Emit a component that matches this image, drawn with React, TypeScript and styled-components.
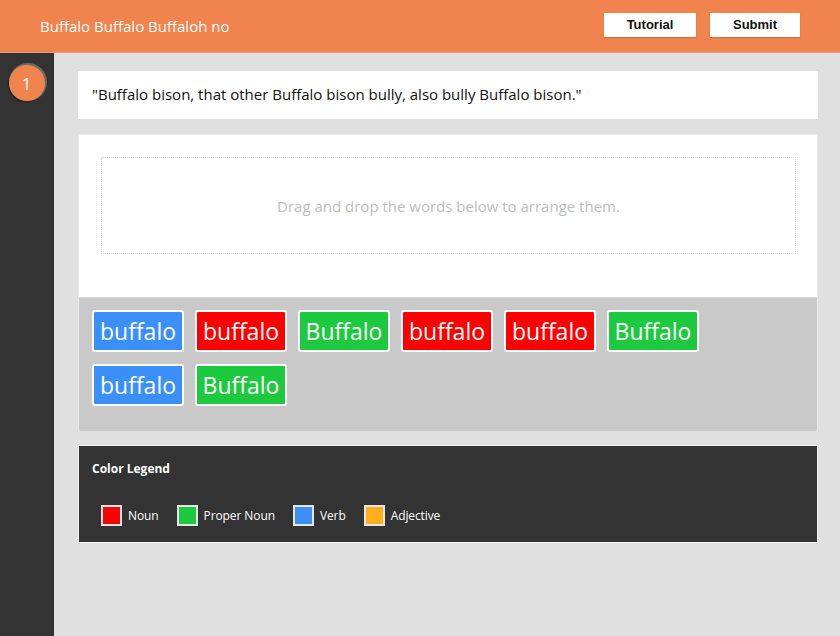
import React from "react";
import styled, { createGlobalStyle } from "styled-components";

const Global = createGlobalStyle`
  html, body { margin: 0; padding: 0; }
  body {
    font-family: "Open Sans", "Liberation Sans", sans-serif;
    background: #e0e0e0;
  }
  * { box-sizing: border-box; }
`;

const Page = styled.div`
  width: 840px;
  height: 636px;
  display: flex;
  flex-direction: column;
  overflow: hidden;
`;

const Header = styled.header`
  height: 53px;
  flex: none;
  background: #f0834e;
  border-bottom: 1px solid #f39c72;
  display: flex;
  align-items: center;
  padding: 0 40px 3px 40px;
`;

const Title = styled.h1`
  margin: 0;
  flex: 1;
  font-size: 15px;
  font-weight: 400;
  color: #fff;
  padding-top: 2px;
`;

const Actions = styled.div`
  display: flex;
  gap: 14px;
`;

const HeaderButton = styled.button<{ $w: number }>`
  width: ${(p) => p.$w}px;
  height: 24px;
  border: none;
  background: #fff;
  font-family: "Liberation Sans", Arial, sans-serif;
  font-weight: 700;
  font-size: 13px;
  color: #111;
  box-shadow: 0 1px 1px rgba(160, 70, 20, 0.35);
  cursor: pointer;
`;

const Body = styled.div`
  flex: 1;
  display: flex;
  min-height: 0;
`;

const Sidebar = styled.aside`
  width: 54px;
  flex: none;
  background: #333;
  padding-top: 12px;
  display: flex;
  flex-direction: column;
  align-items: center;
  padding-right: 1px;
`;

const StepBadge = styled.div`
  width: 36px;
  height: 36px;
  border-radius: 50%;
  background: #f0834e;
  color: #fff;
  font-size: 17px;
  display: flex;
  align-items: center;
  justify-content: center;
  box-shadow: 1px -1px 0 1px #6a6a6a, -1px 1px 2px rgba(0, 0, 0, 0.4);
`;

const Main = styled.main`
  flex: 1;
  padding: 18px 22px 0 24px;
  display: flex;
  flex-direction: column;
`;

const Quote = styled.div`
  height: 48px;
  background: #fff;
  display: flex;
  align-items: center;
  padding: 0 14px 2px;
  font-size: 15px;
  color: #111;
`;

const Workspace = styled.section`
  margin-top: 15px;
  background: #fff;
  border: 1px solid #ececec;
  border-bottom: none;
`;

const DropArea = styled.div`
  margin: 22px 21px 43px 22px;
  height: 97px;
  border: 1px dotted #d4d4d4;
  display: flex;
  align-items: center;
  justify-content: center;
  color: #bdbdbd;
  font-size: 15px;
`;

const WordBank = styled.div`
  background: #c9c9c9;
  border-top: 1px solid #d8d8d8;
  padding: 12px 60px 25px 13px;
  display: flex;
  flex-wrap: wrap;
  gap: 12px 11px;
`;

const Chip = styled.div<{ $c: string }>`
  width: 92px;
  height: 42px;
  background: ${(p) => p.$c};
  border: 2px solid #fff;
  border-radius: 3px;
  color: #fff;
  font-size: 23px;
  display: flex;
  align-items: center;
  justify-content: center;
  padding-bottom: 1px;
`;

const Legend = styled.section`
  margin-top: 14px;
  height: 98px;
  background: #333;
  border: 1px solid #f4f4f4;
  padding: 14px 13px 0;
  color: #fff;
`;

const LegendTitle = styled.div`
  font-size: 12px;
  font-weight: 700;
  height: 18px;
  line-height: 18px;
`;

const LegendRow = styled.div`
  margin-top: 27px;
  display: flex;
  align-items: center;
  padding-left: 9px;
  gap: 18px;
`;

const LegendItem = styled.div`
  display: flex;
  align-items: center;
  gap: 6px;
  font-size: 12px;
  letter-spacing: -0.1px;
`;

const Swatch = styled.span<{ $c: string }>`
  width: 21px;
  height: 21px;
  background: ${(p) => p.$c};
  border: 2px solid #e6e6e6;
`;

const C = {
  noun: "#ff0000",
  proper: "#1dc93e",
  verb: "#3b8ff8",
  adj: "#ffae1e",
};

const words: { t: string; c: string }[] = [
  { t: "buffalo", c: C.verb },
  { t: "buffalo", c: C.noun },
  { t: "Buffalo", c: C.proper },
  { t: "buffalo", c: C.noun },
  { t: "buffalo", c: C.noun },
  { t: "Buffalo", c: C.proper },
  { t: "buffalo", c: C.verb },
  { t: "Buffalo", c: C.proper },
];

const legend = [
  { t: "Noun", c: C.noun },
  { t: "Proper Noun", c: C.proper },
  { t: "Verb", c: C.verb },
  { t: "Adjective", c: C.adj },
];

export default function App() {
  return (
    <Page>
      <Global />
      <Header>
        <Title>Buffalo Buffalo Buffaloh no</Title>
        <Actions>
          <HeaderButton $w={92}>Tutorial</HeaderButton>
          <HeaderButton $w={90}>Submit</HeaderButton>
        </Actions>
      </Header>
      <Body>
        <Sidebar>
          <StepBadge>1</StepBadge>
        </Sidebar>
        <Main>
          <Quote>"Buffalo bison, that other Buffalo bison bully, also bully Buffalo bison."</Quote>
          <Workspace>
            <DropArea>Drag and drop the words below to arrange them.</DropArea>
            <WordBank>
              {words.map((w, i) => (
                <Chip key={i} $c={w.c}>
                  {w.t}
                </Chip>
              ))}
            </WordBank>
          </Workspace>
          <Legend>
            <LegendTitle>Color Legend</LegendTitle>
            <LegendRow>
              {legend.map((l) => (
                <LegendItem key={l.t}>
                  <Swatch $c={l.c} />
                  {l.t}
                </LegendItem>
              ))}
            </LegendRow>
          </Legend>
        </Main>
      </Body>
    </Page>
  );
}
